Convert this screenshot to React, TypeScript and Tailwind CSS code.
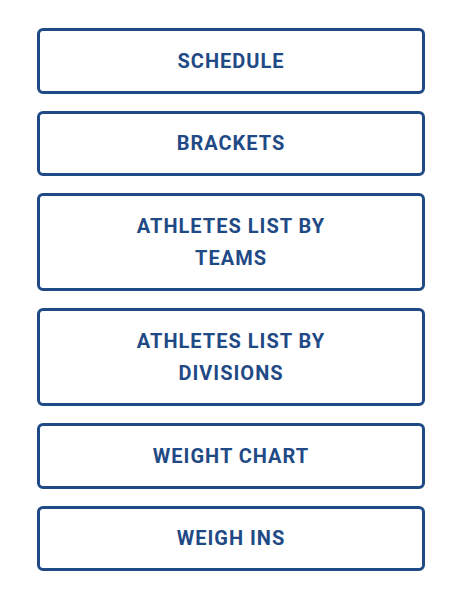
const items = [
  "SCHEDULE",
  "BRACKETS",
  "ATHLETES LIST BY TEAMS",
  "ATHLETES LIST BY DIVISIONS",
  "WEIGHT CHART",
  "WEIGH INS",
];

const App = () => {
  return (
    <div className="bg-white min-h-[600px] pt-[28px]">
      <div className="ml-[37px] w-[388px] flex flex-col gap-[17px]">
        {items.map((label) => (
          <a
            key={label}
            href="#"
            className="block border-[3px] border-solid border-[#1f4a85] rounded-[6px] py-[13.5px] px-[80px] text-center text-[20px] leading-[32.5px] font-bold tracking-[1px] text-[#1f4a85] font-['Roboto',sans-serif]"
          >
            {label}
          </a>
        ))}
      </div>
    </div>
  );
};

export default App;
